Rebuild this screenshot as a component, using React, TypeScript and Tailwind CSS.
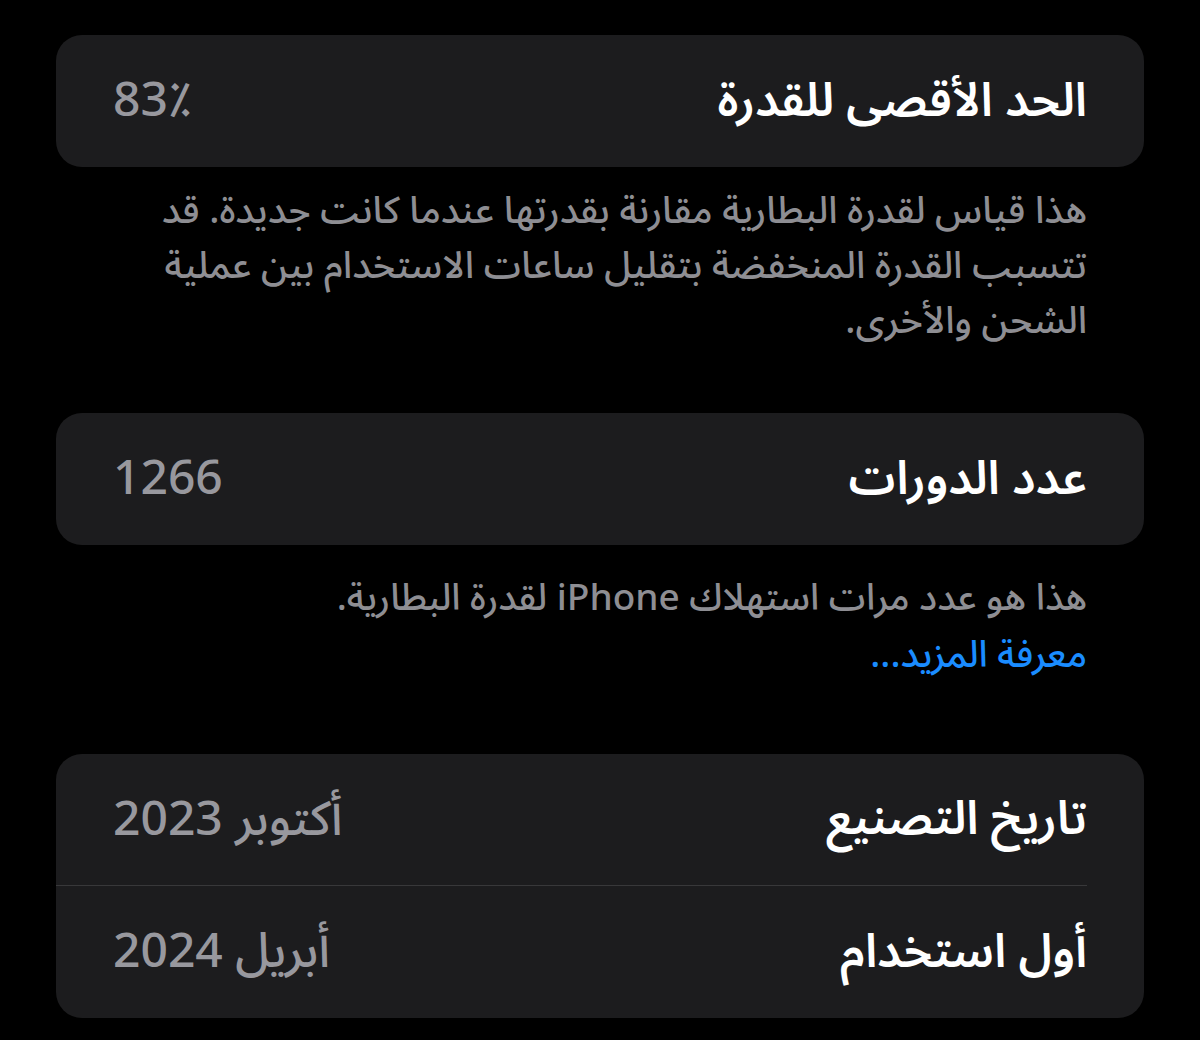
const font = {
  fontFamily: '"Noto Sans Arabic", "Noto Naskh Arabic", "DejaVu Sans", "Noto Sans", sans-serif',
};

function Row({ label, value, h = "h-[132px]" }: { label: string; value: string; h?: string }) {
  return (
    <div className={"flex items-center justify-between pr-[57px] pl-[57px] " + h}>
      <span className="text-[47px] font-semibold leading-none text-white">{label}</span>
      <span className="text-[48px] font-medium leading-none text-[#98989e]">{value}</span>
    </div>
  );
}

export default function App() {
  return (
    <div dir="rtl" style={font} className="min-h-[1040px] w-[1200px] bg-black pt-[35px]">
      <div className="mx-[56px]">
        <div className="overflow-hidden rounded-[26px] bg-[#1c1c1e]">
          <Row label="الحد الأقصى للقدرة" value="83٪" />
        </div>
        <div className="mt-[17px] px-[57px] text-[37.5px] font-medium leading-[55px] text-[#8e8e93]">
          <p>هذا قياس لقدرة البطارية مقارنة بقدرتها عندما كانت جديدة. قد</p>
          <p>تتسبب القدرة المنخفضة بتقليل ساعات الاستخدام بين عملية</p>
          <p>الشحن والأخرى.</p>
        </div>

        <div className="mt-[64px] overflow-hidden rounded-[26px] bg-[#1c1c1e]">
          <Row label="عدد الدورات" value="1266" />
        </div>
        <div className="mt-[25px] px-[57px] text-[37px] font-medium leading-[57px]">
          <p className="text-[#8e8e93]">هذا هو عدد مرات استهلاك iPhone لقدرة البطارية.</p>
          <p className="text-[#1a8cff]">معرفة المزيد...</p>
        </div>

        <div className="mt-[70px] overflow-hidden rounded-[26px] bg-[#1c1c1e]">
          <Row label="تاريخ التصنيع" value="أكتوبر 2023" h="h-[131px]" />
          <div className="mr-[57px] h-px bg-[#38383a]" />
          <Row label="أول استخدام" value="أبريل 2024" h="h-[132px]" />
        </div>
      </div>
    </div>
  );
}
